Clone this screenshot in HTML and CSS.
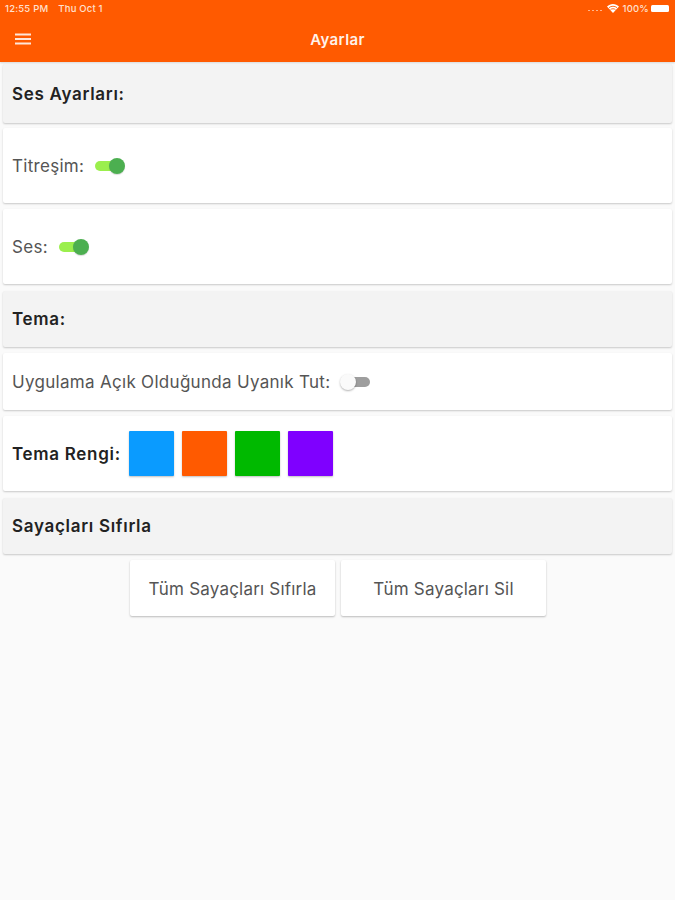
FILE: index.html
```html
<!DOCTYPE html>
<html lang="tr">
<head>
<meta charset="utf-8">
<title>Ayarlar</title>
<link rel="stylesheet" href="styles.css">
</head>
<body>
<header class="appbar">
  <div class="status">
    <div class="status-left"><span>12:55 PM</span><span>Thu Oct 1</span></div>
    <div class="status-right">
      <span class="signal"><i></i><i></i><i></i><i></i></span>
      <svg class="wifi" width="12" height="9" viewBox="0 0 12 9"><path d="M6 9 L0 2.6 C3.4 -0.8 8.6 -0.8 12 2.6 Z" fill="#fff"/><path d="M2 3.6 C4.4 1.8 7.6 1.8 10 3.6 M3.6 5.4 C5 4.6 7 4.6 8.4 5.4" stroke="#ff5a00" stroke-width=".9" fill="none"/></svg>
      <span class="pct">100%</span>
      <span class="battery"></span>
    </div>
  </div>
  <div class="toolbar">
    <svg class="menu" width="16" height="12" viewBox="0 0 16 12"><path d="M0 1.5h16M0 6h16M0 10.5h16" stroke="#fff" stroke-width="2" opacity=".85"/></svg>
    <span class="title">Ayarlar</span>
  </div>
</header>
<main class="content">
  <section class="card head h59"><h2>Ses Ayarları:</h2></section>
  <section class="card row h75 mt5"><span class="label">Titreşim:</span><span class="switch on"></span></section>
  <section class="card row h75 mt6"><span class="label">Ses:</span><span class="switch on"></span></section>
  <section class="card head h56 mt7"><h2>Tema:</h2></section>
  <section class="card row h57 mt6"><span class="label">Uygulama Açık Olduğunda Uyanık Tut:</span><span class="switch off"></span></section>
  <section class="card row h75 mt6">
    <h2>Tema Rengi:</h2>
    <div class="swatches">
      <span class="swatch blue"></span><span class="swatch orange"></span><span class="swatch green"></span><span class="swatch purple"></span>
    </div>
  </section>
  <section class="card head h56 mt7"><h2>Sayaçları Sıfırla</h2></section>
  <div class="actions">
    <button class="btn">Tüm Sayaçları Sıfırla</button>
    <button class="btn">Tüm Sayaçları Sil</button>
  </div>
</main>
</body>
</html>
```
FILE: styles.css
```css
* { box-sizing: border-box; }
html, body { margin: 0; height: 100%; }
body {
  background: #fafafa;
  font-family: Inter, "Liberation Sans", sans-serif;
  color: #444;
  overflow: hidden;
}
.appbar { background: #ff5a00; height: 62px; color: #fff; box-shadow: 0 1px 2px rgba(0,0,0,.15); }
.status {
  height: 16px;
  padding: 1px 6px 0 5px;
  display: flex;
  justify-content: space-between;
  align-items: center;
  font-size: 9.5px;
  letter-spacing: .2px;
  font-weight: 500;
  color: #ffe0cf;
}
.status-left { display: flex; gap: 10px; }
.status-right { display: flex; align-items: center; gap: 3px; }
.signal { display: flex; gap: 2px; margin-right: 2px; }
.signal i { width: 2px; height: 1px; background: #ffb48c; margin-top: 3px; }
.pct { margin-left: 1px; }
.battery { width: 18px; height: 7px; background: #fff; border-radius: 1.5px; margin-left: -1px; }
.toolbar {
  height: 46px;
  display: flex;
  align-items: center;
  justify-content: center;
  position: relative;
}
.menu { position: absolute; left: 15px; top: 17px; }
.title { font-size: 15px; font-weight: 600; letter-spacing: .4px; color: #fff2ea; }
.content { padding: 2px 3px 0; }
.card {
  background: #fff;
  border-radius: 2px;
  box-shadow: 0 1px 2px rgba(0,0,0,.2);
  display: flex;
  align-items: center;
  padding-left: 9px;
}
.head { background: #f3f3f3; }
.h59 { height: 59px; }
.h56 { height: 56px; }
.h57 { height: 57px; }
.h75 { height: 75px; }
.mt5 { margin-top: 5px; }
.mt6 { margin-top: 6px; }
.mt7 { margin-top: 7px; }
h2 { margin: 0; font-size: 17px; letter-spacing: .7px; font-weight: 600; color: #222; }
.label { font-size: 17px; letter-spacing: .3px; color: #555; }
.switch { position: relative; display: inline-block; width: 28px; height: 10px; border-radius: 5px; margin-left: 11px; }
.switch::after { content: ""; position: absolute; top: -3px; width: 16px; height: 16px; border-radius: 50%; }
.switch.on { background: #9bef4d; }
.switch.on::after { right: -2px; background: #4caf50; box-shadow: 0 1px 1px rgba(0,0,0,.15); }
.switch.off { background: #9e9e9e; margin-left: 11px; width: 29px; }
.switch.off::after { left: -1px; background: #fafafa; box-shadow: 0 1px 2px rgba(0,0,0,.3); }
.swatches { display: flex; gap: 8px; margin-left: 8px; }
.swatch { width: 45px; height: 45px; border-radius: 1px; box-shadow: 0 1px 2px rgba(0,0,0,.25); }
.blue { background: #0a9bff; }
.orange { background: #ff5a00; }
.green { background: #00b900; }
.purple { background: #7f00ff; }
.actions { display: flex; justify-content: center; gap: 6px; margin-top: 6px; padding-left: 1px; }
.btn {
  width: 205px;
  height: 56px;
  padding-top: 2px;
  border: 0;
  background: #fff;
  border-radius: 2px;
  box-shadow: 0 1px 2px rgba(0,0,0,.25);
  font: 400 17px Inter, "Liberation Sans", sans-serif;
  letter-spacing: .2px;
  color: #555;
}
```
